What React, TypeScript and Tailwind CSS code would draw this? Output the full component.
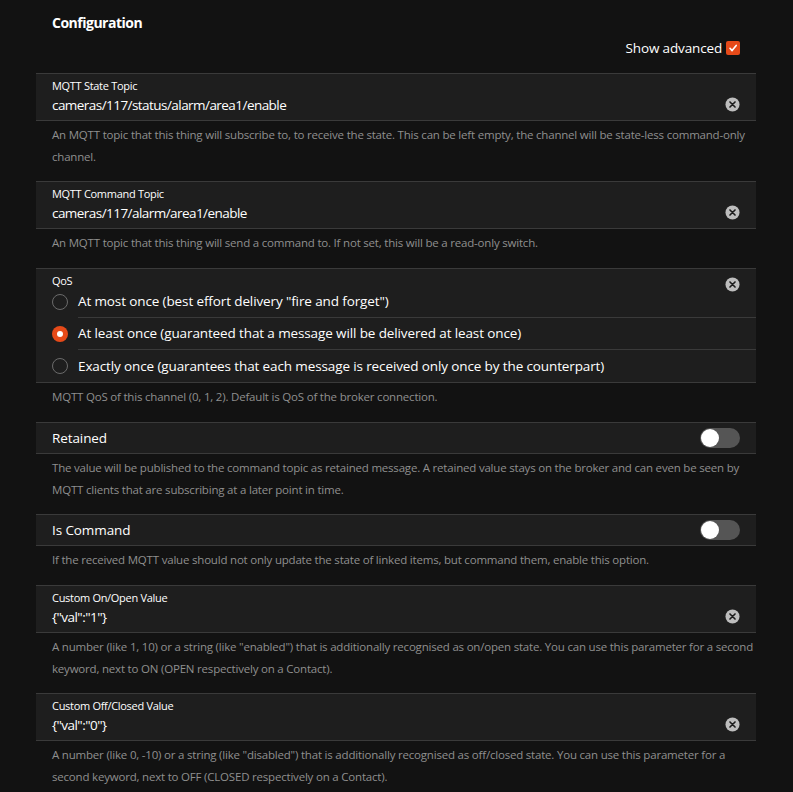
import React from "react";

const font = { fontFamily: '"Open Sans", "Noto Sans", sans-serif' };

function ClearIcon() {
  return (
    <svg width="15" height="15" viewBox="0 0 16 16" className="shrink-0">
      <circle cx="8" cy="8" r="7.5" fill="#bdbdbd" />
      <path d="M5.3 5.3 L10.7 10.7 M10.7 5.3 L5.3 10.7" stroke="#1c1c1c" strokeWidth="1.7" strokeLinecap="round" />
    </svg>
  );
}

function Desc({ children, cls = "" }: { children: React.ReactNode; cls?: string }) {
  return (
    <div className={`pl-4 pr-[2px] pt-[3px] text-[11.5px] tracking-[-0.2px] leading-[22px] text-[#8f8f8f] ${cls}`}>{children}</div>
  );
}

function TextField({ label, value }: { label: string; value: string }) {
  return (
    <div className="border-y border-[#3a3a3a] bg-[#1e1e1e] h-[48px] pl-4 pr-4 flex items-center">
      <div className="flex-1 flex flex-col">
        <div className="text-[11px] tracking-[-0.3px] leading-[14px] text-white mt-[-1px]">{label}</div>
        <div className="text-[13.5px] tracking-[-0.55px] leading-[20px] text-white mt-[2px]">{value}</div>
      </div>
      <div className="mt-[15px] mr-[0px]">
        <ClearIcon />
      </div>
    </div>
  );
}

function Toggle() {
  return (
    <div className="w-[40px] h-[20px] rounded-full bg-[#555555] relative">
      <div className="absolute left-[1px] top-[1px] w-[18px] h-[18px] rounded-full bg-white" />
    </div>
  );
}

function ToggleField({ label }: { label: string }) {
  return (
    <div className="border-y border-[#3a3a3a] bg-[#1e1e1e] h-[32px] pl-4 pr-4 flex items-center justify-between">
      <div className="text-[13.5px] tracking-[-0.1px] text-white">{label}</div>
      <Toggle />
    </div>
  );
}

function Radio({ checked }: { checked?: boolean }) {
  if (checked)
    return (
      <div className="w-[16px] h-[16px] rounded-full bg-[#e64a19] flex items-center justify-center shrink-0">
        <div className="w-[6px] h-[6px] rounded-full bg-white" />
      </div>
    );
  return <div className="w-[16px] h-[16px] rounded-full border-[1.5px] border-[#6b6b6b] shrink-0" />;
}

function RadioRow({ text, checked, divider }: { text: string; checked?: boolean; divider?: boolean }) {
  return (
    <div className="flex items-center h-[32px] pl-4">
      <Radio checked={checked} />
      <div
        className={`ml-[10px] flex-1 h-full flex items-center text-[13.5px] tracking-[-0.12px] text-white ${
          divider ? "border-b border-[#3a3a3a]" : ""
        }`}
      >
        {text}
      </div>
    </div>
  );
}

export default function App() {
  return (
    <div className="min-h-[792px] bg-[#121212] w-full" style={font}>
      <div className="ml-[36px] w-[720px]">
        <div className="pl-4 pt-[13px] text-[14px] tracking-[-0.5px] leading-[20px] font-bold text-white">Configuration</div>
        <div className="flex justify-end items-center pr-4 mt-[6px] h-[18px]">
          <span className="text-[13.5px] tracking-[-0.15px] text-white mr-[4px]">Show advanced</span>
          <div className="w-[14px] h-[14px] rounded-[2px] bg-[#e64a19] flex items-center justify-center">
            <svg width="10" height="10" viewBox="0 0 10 10">
              <path d="M2 5.3 L4.1 7.6 L8.2 2.4" stroke="white" strokeWidth="1.6" fill="none" strokeLinecap="round" strokeLinejoin="round" />
            </svg>
          </div>
        </div>

        <div className="mt-[16px]">
          <TextField label="MQTT State Topic" value="cameras/117/status/alarm/area1/enable" />
          <Desc cls="pb-[13px]">
            An MQTT topic that this thing will subscribe to, to receive the state. This can be left empty, the channel will be state-less command-only channel.
          </Desc>

          <TextField label="MQTT Command Topic" value="cameras/117/alarm/area1/enable" />
          <Desc cls="pb-[14px]">An MQTT topic that this thing will send a command to. If not set, this will be a read-only switch.</Desc>

          <div className="border-y border-[#3a3a3a] bg-[#1e1e1e]">
            <div className="flex items-start pl-4 pr-4 h-[17px]">
              <div className="flex-1 text-[11px] tracking-[-0.3px] leading-[14px] text-white mt-[5px]">QoS</div>
              <div className="mt-[8px]">
                <ClearIcon />
              </div>
            </div>
            <RadioRow text={'At most once (best effort delivery "fire and forget")'} divider />
            <RadioRow text="At least once (guaranteed that a message will be delivered at least once)" checked divider />
            <RadioRow text="Exactly once (guarantees that each message is received only once by the counterpart)" />
          </div>
          <Desc cls="pb-[14px]">MQTT QoS of this channel (0, 1, 2). Default is QoS of the broker connection.</Desc>

          <ToggleField label="Retained" />
          <Desc cls="pb-[13px]">
            The value will be published to the command topic as retained message. A retained value stays on the broker and can even be seen by MQTT clients that are subscribing at a later point in time.
          </Desc>

          <ToggleField label="Is Command" />
          <Desc cls="pb-[14px]">
            If the received MQTT value should not only update the state of linked items, but command them, enable this option.
          </Desc>

          <TextField label="Custom On/Open Value" value={'{"val":"1"}'} />
          <Desc cls="pb-[13px]">
            A number (like 1, 10) or a string (like "enabled") that is additionally recognised as on/open state. You can use this parameter for a second keyword, next to ON (OPEN respectively on a Contact).
          </Desc>

          <TextField label="Custom Off/Closed Value" value={'{"val":"0"}'} />
          <Desc cls="pb-[14px] pr-[30px]">
            A number (like 0, -10) or a string (like "disabled") that is additionally recognised as off/closed state. You can use this parameter for a second keyword, next to OFF (CLOSED respectively on a Contact).
          </Desc>
        </div>
      </div>
    </div>
  );
}
